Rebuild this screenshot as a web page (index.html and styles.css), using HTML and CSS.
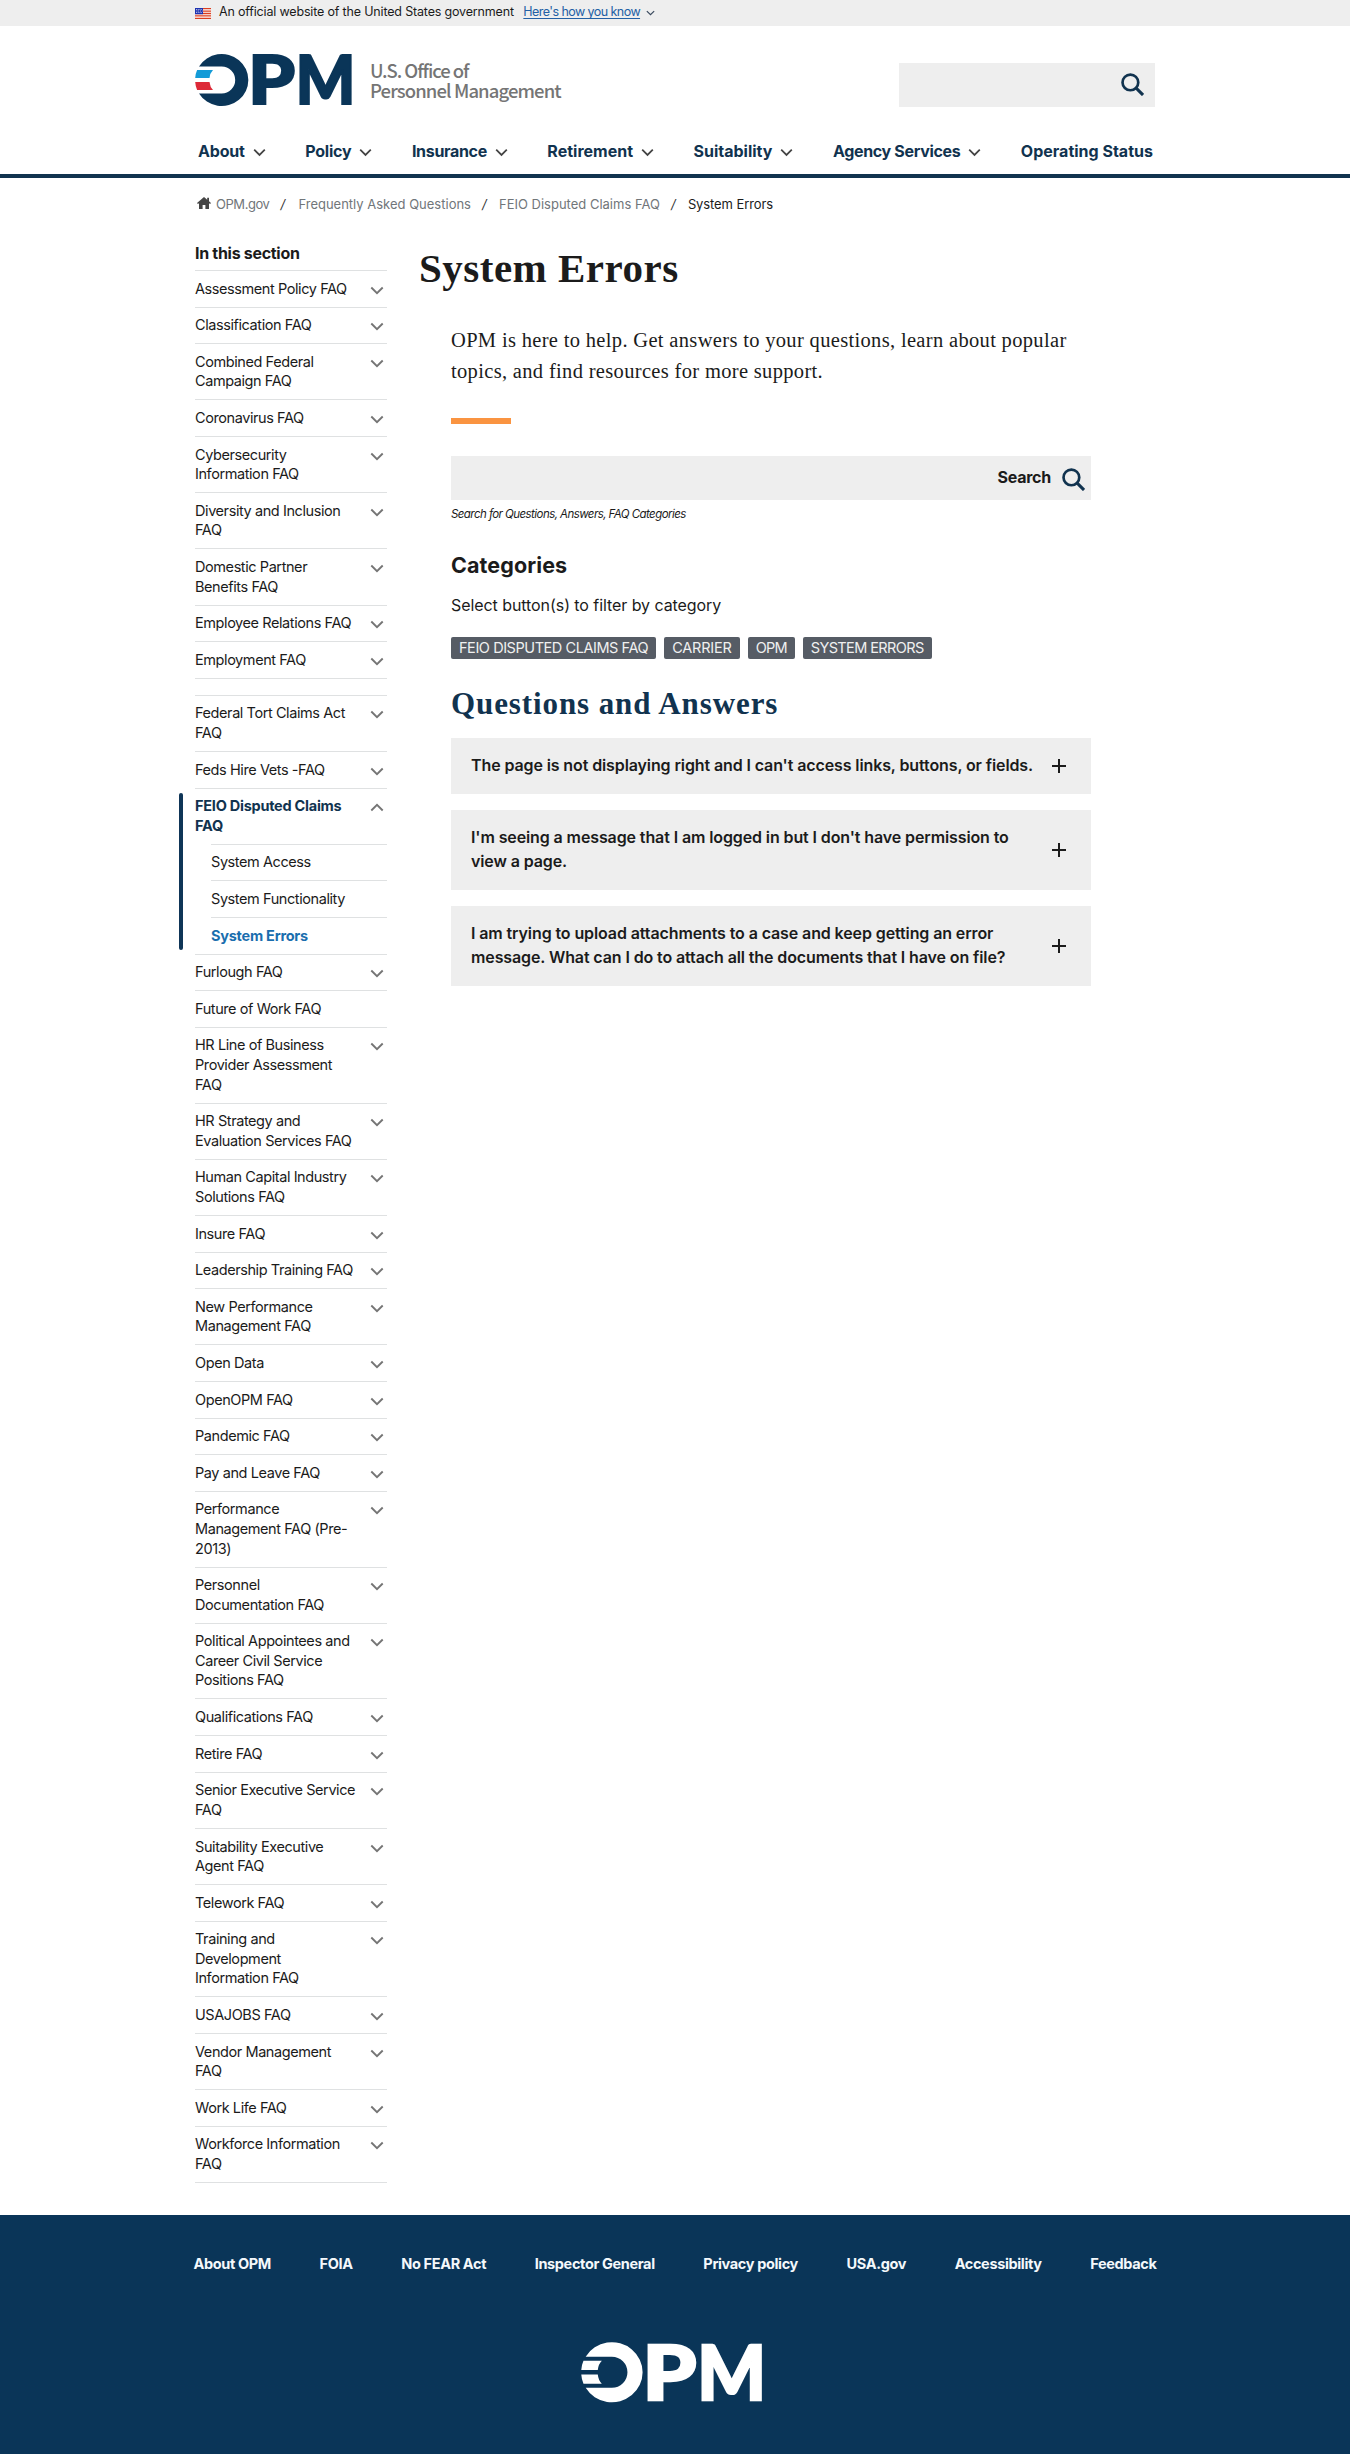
FILE: index.html
```html
<!DOCTYPE html>
<html lang="en">
<head>
<meta charset="utf-8">
<title>System Errors - OPM.gov</title>
<link rel="stylesheet" href="styles.css">
</head>
<body>
<svg class="sprite" aria-hidden="true">
  <symbol id="chev" viewBox="0 0 14 9"><path d="M1.3 1.5 7 7.1l5.7-5.6" fill="none" stroke="currentColor" stroke-width="1.9"/></symbol>
  <symbol id="search" viewBox="0 0 24 24"><circle cx="9.8" cy="9.8" r="8.2" fill="none" stroke="currentColor" stroke-width="2.8"/><path d="M15.6 15.6 23 23" stroke="currentColor" stroke-width="3.2" fill="none"/></symbol>
  <symbol id="plus" viewBox="0 0 14 14"><path d="M7 0v14M0 7h14" stroke="currentColor" stroke-width="2" fill="none"/></symbol>
  <symbol id="home" viewBox="0 0 14 12"><path d="M7 0 0 6l.9 1L2 6.200V12h3.600V8h2.800v4H12V6.200L13.100 7 14 6l-2-1.700V.8h-1.800v2z" fill="currentColor"/></symbol>
  <symbol id="flag" viewBox="0 0 16 11">
    <rect width="16" height="11" fill="#fff"/>
    <path d="M0 .7h16M0 3.100h16M0 5.500h16M0 7.900h16M0 10.300h16" stroke="#db3e1f" stroke-width="1.300"/>
    <rect width="8" height="6.200" fill="#1e33b1"/>
    <path d="M1 1.500h6M1.500 3h6M1 4.500h6" stroke="#fff" stroke-width=".8" stroke-dasharray=".8 1"/>
  </symbol>
  <symbol id="opm" viewBox="195 33 162 90">
    <path d="M199 66.500A26.600 26 0 1 1 199 93.500H221.700A13.500 13.500 0 0 0 221.700 66.500Z" fill="currentColor"/>
    <path class="stripe-blue" d="M197.100 70H213Q210 73 209.500 78H195.200Q195.500 73.500 197.100 70Z"/>
    <path class="stripe-red" d="M195.200 82H209.500Q210 87 213 90H197.100Q195.500 86.500 195.200 82Z"/>
    <text x="248.300" y="104" class="logo-letter" textLength="46.800" lengthAdjust="spacingAndGlyphs">P</text>
    <text x="295.700" y="104" class="logo-letter" textLength="59.600" lengthAdjust="spacingAndGlyphs">M</text>
  </symbol>
</svg>

<div class="banner"><div class="wrap banner-in">
  <svg class="flag"><use href="#flag"/></svg>
  <span class="banner-text">An official website of the United States government</span>
  <a class="banner-link">Here's how you know</a>
  <svg class="banner-chev"><use href="#chev"/></svg>
</div></div>

<header class="header">
  <div class="wrap brand">
    <svg class="logo"><use href="#opm"/></svg>
    <div class="agency"><span class="agency-a">U.S. Office of</span><span>Personnel Management</span></div>
    <div class="site-search"><svg class="search-icon"><use href="#search"/></svg></div>
  </div>
  <nav class="wrap nav">
    <a>About<svg><use href="#chev"/></svg></a>
    <a>Policy<svg><use href="#chev"/></svg></a>
    <a class="tight">Insurance<svg><use href="#chev"/></svg></a>
    <a class="loose">Retirement<svg><use href="#chev"/></svg></a>
    <a class="loose">Suitability<svg><use href="#chev"/></svg></a>
    <a class="tight">Agency Services<svg><use href="#chev"/></svg></a>
    <a class="loose">Operating Status</a>
  </nav>
</header>

<div class="wrap crumbs">
  <svg class="home"><use href="#home"/></svg><a class="crumb-home">OPM.gov</a><i>/</i><a>Frequently Asked Questions</a><i>/</i><a>FEIO Disputed Claims FAQ</a><i>/</i><span>System Errors</span>
</div>

<div class="wrap columns">
  <aside class="side">
    <h2 class="side-title">In this section</h2>
    <ul class="side-list">
      <li><a>Assessment Policy FAQ</a><svg><use href="#chev"/></svg></li>
      <li><a>Classification FAQ</a><svg><use href="#chev"/></svg></li>
      <li><a>Combined Federal Campaign FAQ</a><svg><use href="#chev"/></svg></li>
      <li><a>Coronavirus FAQ</a><svg><use href="#chev"/></svg></li>
      <li><a>Cybersecurity Information FAQ</a><svg><use href="#chev"/></svg></li>
      <li><a>Diversity and Inclusion FAQ</a><svg><use href="#chev"/></svg></li>
      <li><a>Domestic Partner Benefits FAQ</a><svg><use href="#chev"/></svg></li>
      <li><a>Employee Relations FAQ</a><svg><use href="#chev"/></svg></li>
      <li><a>Employment FAQ</a><svg><use href="#chev"/></svg></li>
      <li class="empty"></li>
      <li><a>Federal Tort Claims Act FAQ</a><svg><use href="#chev"/></svg></li>
      <li><a>Feds Hire Vets -FAQ</a><svg><use href="#chev"/></svg></li>
      <li class="group">
        <div class="group-head"><a>FEIO Disputed Claims FAQ</a><svg class="up"><use href="#chev"/></svg></div>
        <ul class="sub">
          <li><a>System Access</a></li>
          <li><a>System Functionality</a></li>
          <li><a class="here">System Errors</a></li>
        </ul>
      </li>
      <li><a>Furlough FAQ</a><svg><use href="#chev"/></svg></li>
      <li><a>Future of Work FAQ</a></li>
      <li><a>HR Line of Business Provider Assessment FAQ</a><svg><use href="#chev"/></svg></li>
      <li><a>HR Strategy and Evaluation Services FAQ</a><svg><use href="#chev"/></svg></li>
      <li><a>Human Capital Industry Solutions FAQ</a><svg><use href="#chev"/></svg></li>
      <li><a>Insure FAQ</a><svg><use href="#chev"/></svg></li>
      <li><a>Leadership Training FAQ</a><svg><use href="#chev"/></svg></li>
      <li><a>New Performance Management FAQ</a><svg><use href="#chev"/></svg></li>
      <li><a>Open Data</a><svg><use href="#chev"/></svg></li>
      <li><a>OpenOPM FAQ</a><svg><use href="#chev"/></svg></li>
      <li><a>Pandemic FAQ</a><svg><use href="#chev"/></svg></li>
      <li><a>Pay and Leave FAQ</a><svg><use href="#chev"/></svg></li>
      <li><a>Performance Management FAQ (Pre-2013)</a><svg><use href="#chev"/></svg></li>
      <li><a>Personnel Documentation FAQ</a><svg><use href="#chev"/></svg></li>
      <li><a>Political Appointees and Career Civil Service Positions FAQ</a><svg><use href="#chev"/></svg></li>
      <li><a>Qualifications FAQ</a><svg><use href="#chev"/></svg></li>
      <li><a>Retire FAQ</a><svg><use href="#chev"/></svg></li>
      <li><a>Senior Executive Service FAQ</a><svg><use href="#chev"/></svg></li>
      <li><a>Suitability Executive Agent FAQ</a><svg><use href="#chev"/></svg></li>
      <li><a>Telework FAQ</a><svg><use href="#chev"/></svg></li>
      <li><a>Training and Development Information FAQ</a><svg><use href="#chev"/></svg></li>
      <li><a>USAJOBS FAQ</a><svg><use href="#chev"/></svg></li>
      <li><a>Vendor Management FAQ</a><svg><use href="#chev"/></svg></li>
      <li><a>Work Life FAQ</a><svg><use href="#chev"/></svg></li>
      <li><a>Workforce Information FAQ</a><svg><use href="#chev"/></svg></li>
    </ul>
  </aside>

  <main class="main">
    <h1>System Errors</h1>
    <div class="body">
      <p class="intro">OPM is here to help. Get answers to your questions, learn about popular<br>topics, and find resources for more support.</p>
      <div class="accent"></div>
      <div class="faq-search"><span>Search</span><svg class="search-icon"><use href="#search"/></svg></div>
      <p class="hint">Search for Questions, Answers, FAQ Categories</p>
      <h3>Categories</h3>
      <p class="select">Select button(s) to filter by category</p>
      <div class="tags"><button>FEIO DISPUTED CLAIMS FAQ</button><button class="short">CARRIER</button><button class="shortest">OPM</button><button class="mid">SYSTEM ERRORS</button></div>
      <h2>Questions and Answers</h2>
      <div class="qas">
        <div class="qa"><span>The page is not displaying right and I can't access links, buttons, or fields.</span><svg><use href="#plus"/></svg></div>
        <div class="qa"><span>I'm seeing a message that I am logged in but I don't have permission to<br>view a page.</span><svg><use href="#plus"/></svg></div>
        <div class="qa"><span>I am trying to upload attachments to a case and keep getting an error<br>message. What can I do to attach all the documents that I have on file?</span><svg><use href="#plus"/></svg></div>
      </div>
    </div>
  </main>
</div>

<footer class="footer">
  <div class="wrap foot-links"><a>About OPM</a><a>FOIA</a><a>No FEAR Act</a><a>Inspector General</a><a>Privacy policy</a><a>USA.gov</a><a>Accessibility</a><a>Feedback</a></div>
  <svg class="foot-logo"><use href="#opm"/></svg>
</footer>
</body>
</html>
```
FILE: styles.css
```css
* { box-sizing: border-box; }
body { display: flex; flex-direction: column; min-height: 100vh; margin: 0; background: #fff; color: #1b1b1b; font: 16px/1.5 Inter, sans-serif; }
h1, h2, h3, p, ul { margin: 0; padding: 0; }
ul { list-style: none; }
svg { display: block; flex: none; }
.sprite { position: absolute; width: 0; height: 0; }
.wrap { width: 960px; margin: 0 auto; }

.banner { height: 25.600px; background: #eee; }
.banner-in { display: flex; align-items: center; height: 25px; font-size: 12.500px; letter-spacing: -.17px; }
.flag { width: 16px; height: 11px; margin: 2px 8px 0 0; }
.banner-link { margin-left: 9.500px; color: #2360a5; text-decoration: underline; letter-spacing: -.56px; text-underline-offset: 2px; }
.banner-chev { width: 9px; height: 6px; margin-left: 6px; color: #3a4a5e; }

.header { border-bottom: 4px solid #11334f; height: 152.400px; }
.brand { display: flex; align-items: flex-start; padding-top: 27.400px; height: 109px; }
.logo { width: 162px; height: 90px; margin: -20px -3px -16px 0; color: #0a3558; }
.stripe-blue { fill: var(--blue, #149bd7); }
.stripe-red { fill: var(--red, #dd2a38); }
.logo-letter { font: 900 66.500px Lato, sans-serif; fill: currentColor; stroke: currentColor; stroke-width: 2.200px; }
.agency { display: flex; flex-direction: column; margin: 7px 0 0 16px; color: #757575; font: 500 18.500px/20px "Noto Sans CJK SC", sans-serif; letter-spacing: -.9px; white-space: nowrap; }
.agency-a { letter-spacing: -1.050px; }
.site-search { display: flex; align-items: center; justify-content: flex-end; width: 256px; height: 44px; margin: 10px 0 0 auto; padding-right: 11px; background: #eee; }
.search-icon { width: 23px; height: 23px; color: #11334f; }
.nav { display: flex; justify-content: space-between; padding: 4.500px 2px 0 3px; color: #11334f; font-weight: 700; letter-spacing: -.2px; }
.nav a { display: flex; align-items: center; }
.nav svg { width: 13px; height: 9px; margin: 2px 0 0 8px; color: #444; }
.nav .tight { letter-spacing: -.33px; }
.nav .loose { letter-spacing: 0; }

.crumbs { display: flex; align-items: center; height: 52px; color: #71767a; font-size: 13px; padding: 2px 0 0 2px; }
.crumbs i { width: 29px; padding-left: 11px; color: #333; font-size: 13px; }
.crumbs a + i ~ a + i { width: 28px; }
.crumbs .home { width: 14px; height: 12px; margin: -3px 5px 0 0; color: #454545; }
.crumbs .crumb-home { letter-spacing: -.45px; }
.crumbs span { color: #1b1b1b; letter-spacing: -.1px; }

.columns { display: flex; align-items: flex-start; }
.side { width: 192px; padding-top: 10px; }
.side-title { font-size: 16px; line-height: 24px; letter-spacing: -.3px; height: 30px; padding-top: 1px; }
.side-list { border-bottom: 1px solid #dfe1e2; font-size: 14.500px; line-height: 19.550px; letter-spacing: -.42px; }
.side-list > li, .sub li { display: flex; justify-content: space-between; padding: 7.600px 0 8.490px; border-top: 1px solid #dfe1e2; }
.side-list a { width: 162px; }
.side-list svg { width: 14px; height: 9px; margin: 7px 3.500px 0 0; color: #757575; }
.side-list .empty { height: 17px; padding: 0; }
.side-list .group { position: relative; display: block; padding: 0; }
.group::before { content: ""; position: absolute; left: -16px; top: 4px; bottom: 4px; width: 4px; border-radius: 2px; background: #0f3557; }
.group-head { display: flex; justify-content: space-between; padding: 7.600px 0 8.490px; color: #11334f; font-weight: 700; letter-spacing: -.25px; }
.side-list .up { transform: scaleY(-1); }
.sub { margin-left: 16px; }
.sub .here { color: #1a6eae; font-weight: 700; letter-spacing: -.25px; }

.main { width: 768px; padding-left: 32px; }
h1 { font: 700 41px/48px "Liberation Serif", serif; letter-spacing: .5px; margin-top: 14px; }
.body { width: 640px; margin-left: 32px; }
.intro { margin-top: 33px; font: 20.500px/31.200px "Liberation Serif", serif; letter-spacing: .33px; white-space: nowrap; }
.accent { width: 60px; height: 6px; margin-top: 30.600px; background: #fa9441; }
.faq-search { display: flex; align-items: center; justify-content: flex-end; height: 44px; margin-top: 32px; padding-right: 6px; background: #eee; font-weight: 700; letter-spacing: -.24px; }
.faq-search span { margin-top: -2px; }
.faq-search .search-icon { margin: 3px 0 0 11px; }
.hint { margin-top: 6px; font-size: 11.500px; line-height: 17px; font-style: italic; letter-spacing: -.56px; }
h3 { margin-top: 26px; font-size: 21.500px; line-height: 32px; letter-spacing: .1px; }
.select { margin-top: 12px; line-height: 24px; letter-spacing: -.07px; }
.tags { display: flex; gap: 8px; margin-top: 20px; }
.tags button { height: 22px; padding: 0 8px; border: 0; border-radius: 2px; background: #565c65; color: #f0f0f0; font: 14.500px/22px Inter, sans-serif; letter-spacing: -.44px; }
.tags .short { letter-spacing: -.2px; }
.tags .shortest { letter-spacing: -.8px; }
.tags .mid { letter-spacing: -.6px; }
.body h2 { margin-top: 25px; font: 700 31px/40px "Liberation Serif", serif; letter-spacing: .9px; color: #11334f; }
.qas { display: grid; gap: 16px; margin-top: 14px; }
.qa { display: flex; align-items: center; justify-content: space-between; padding: 15px 25px 17px 20px; background: #eee; font-weight: 600; line-height: 24px; letter-spacing: -.11px; white-space: nowrap; }
.qa svg { width: 14px; height: 14px; margin-top: 2px; }

.footer { flex: 1 0 238px; margin-top: 32px; background: #0a3558; color: #f4f8fb; }
.foot-links { display: flex; justify-content: space-between; width: 965px; padding: 38px 1px 0; font-size: 14.500px; line-height: 22px; font-weight: 700; letter-spacing: -.36px; }
.foot-logo { width: 187.100px; height: 103.900px; margin: 42.500px 0 0 581px; color: #fff; --blue: #fff; --red: #fff; }
```
